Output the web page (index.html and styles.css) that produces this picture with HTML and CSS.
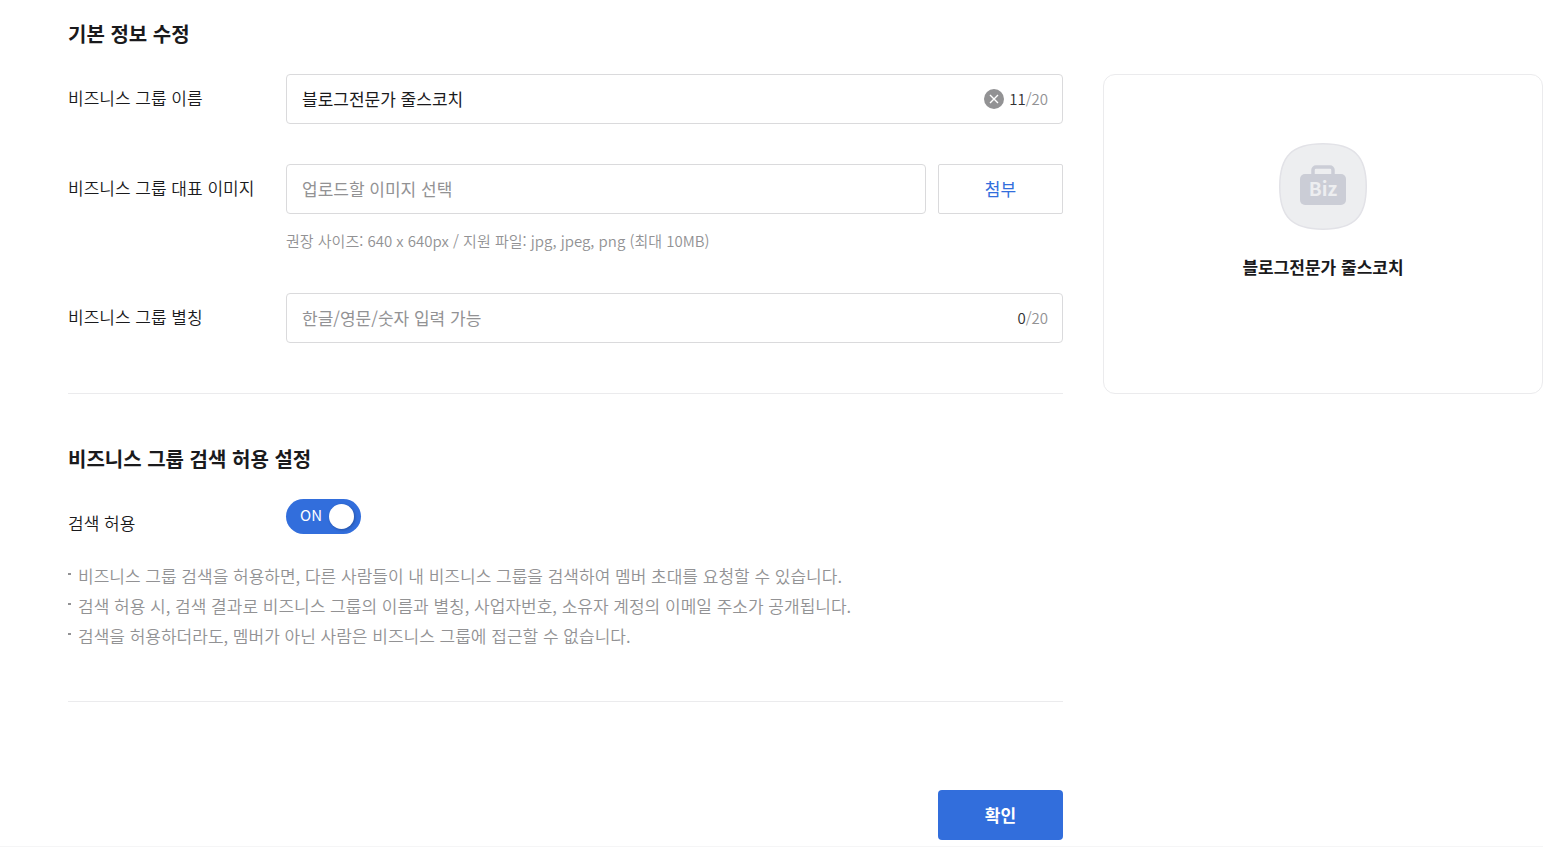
FILE: index.html
```html
<!DOCTYPE html>
<html lang="ko">
<head>
<meta charset="utf-8">
<meta name="viewport" content="width=device-width, initial-scale=1">
<title>비즈니스 그룹 정보 수정</title>
<link rel="stylesheet" href="styles.css">
</head>
<body>
<main class="page">
  <form class="form">
    <section class="section basic">
      <h2 class="title">기본 정보 수정</h2>
      <div class="row">
        <label class="label" for="name">비즈니스 그룹 이름</label>
        <div class="field">
          <div class="box">
            <input class="input" id="name" type="text" value="블로그전문가 줄스코치">
            <button class="clear" type="button" aria-label="지우기">
              <svg width="20" height="20" viewBox="0 0 20 20"><circle cx="10" cy="10" r="10" fill="#929294"/><path d="M6 6l8 8M14 6l-8 8" stroke="#fff" stroke-width="1.4"/></svg>
            </button>
            <span class="count"><span class="current">11</span>/20</span>
          </div>
        </div>
      </div>
      <div class="row">
        <label class="label" for="image">비즈니스 그룹 대표 이미지</label>
        <div class="field">
          <div class="upload">
            <div class="box"><input class="input" id="image" type="text" placeholder="업로드할 이미지 선택" readonly></div>
            <button class="button attach" type="button">첨부</button>
          </div>
          <p class="hint">권장 사이즈: 640 x 640px / 지원 파일: jpg, jpeg, png (최대 10MB)</p>
        </div>
      </div>
      <div class="row">
        <label class="label" for="alias">비즈니스 그룹 별칭</label>
        <div class="field">
          <div class="box">
            <input class="input" id="alias" type="text" placeholder="한글/영문/숫자 입력 가능">
            <span class="count"><span class="current">0</span>/20</span>
          </div>
        </div>
      </div>
    </section>
    <section class="section search">
      <h2 class="title">비즈니스 그룹 검색 허용 설정</h2>
      <div class="row allow">
        <label class="label" for="allow">검색 허용</label>
        <div class="switch">
          <input class="toggle" id="allow" type="checkbox" role="switch" checked>
          <span class="state" aria-hidden="true">ON</span>
          <span class="knob"></span>
        </div>
      </div>
      <ul class="notes">
        <li class="note">비즈니스 그룹 검색을 허용하면, 다른 사람들이 내 비즈니스 그룹을 검색하여 멤버 초대를 요청할 수 있습니다.</li>
        <li class="note">검색 허용 시, 검색 결과로 비즈니스 그룹의 이름과 별칭, 사업자번호, 소유자 계정의 이메일 주소가 공개됩니다.</li>
        <li class="note">검색을 허용하더라도, 멤버가 아닌 사람은 비즈니스 그룹에 접근할 수 없습니다.</li>
      </ul>
    </section>
    <div class="actions"><button class="button submit" type="submit">확인</button></div>
  </form>
  <aside class="card">
    <svg class="avatar" width="88" height="88" viewBox="0 0 88 88" role="img" aria-label="Biz">
      <path d="M44 .75C75 .75 87.250 13 87.250 43.500S75 86.250 44 86.250.75 74 .75 43.500 13 .75 44 .75Z" fill="#edeef0" stroke="#e2e2e7" stroke-width="1.500"/>
      <path d="M34 32v-5a3 3 0 0 1 3-3h14a3 3 0 0 1 3 3v5" fill="none" stroke="#cbcdd6" stroke-width="3.500"/>
      <rect x="21" y="31" width="46" height="31" rx="5" fill="#cbcdd6"/>
      <text class="avatar-text" x="44" y="53" text-anchor="middle">Biz</text>
    </svg>
    <strong class="card-name">블로그전문가 줄스코치</strong>
  </aside>
</main>
</body>
</html>
```

FILE: styles.css
```css
*, *::before { box-sizing: border-box; }
body {
  margin: 0;
  background: #fff;
  color: #1a1a1c;
  font: 400 17px/24px "Noto Sans CJK KR", sans-serif;
}
input, button { font: inherit; }
.page {
  display: flex;
  align-items: flex-start;
  gap: 40px;
  margin-right: 3px;
  padding: 22px 0 6px 68px;
  border-bottom: 1px solid #f5f5f6;
}
.form { flex: 1; min-width: 0; }
.section { border-bottom: 1px solid #ebebed; }
.basic { padding-bottom: 50px; }
.search { padding: 53px 0 50px; }
.title { margin: 0 0 28px; font-size: 20px; line-height: 24px; font-weight: 700; }
.row { display: flex; align-items: flex-start; }
.row + .row { margin-top: 40px; }
.label { flex: 0 0 218px; padding-top: 12px; font-weight: 350; }
.field { flex: 1; min-width: 0; }
.box {
  display: flex;
  flex: 1;
  align-items: center;
  min-width: 0;
  height: 50px;
  padding: 0 14px 0 15px;
  border: 1px solid #dadadc;
  border-radius: 4px;
}
.input {
  flex: 1;
  min-width: 0;
  padding: 0;
  border: 0;
  outline: 0;
  background: none;
  color: #1a1a1c;
}
.input::placeholder { color: #929294; opacity: 1; }
.clear {
  display: flex;
  margin-right: 5px;
  padding: 0;
  border: 0;
  background: none;
  cursor: pointer;
}
.count { color: #929294; font-size: 15px; font-weight: 350; }
.current { color: #303032; }
.upload { display: flex; gap: 12px; }
.button {
  width: 125px;
  height: 50px;
  padding: 0;
  border: 1px solid #dadadc;
  border-radius: 2px;
  background: #fff;
  color: #326edc;
  cursor: pointer;
}
.submit { border: 0; border-radius: 4px; background: #326edc; color: #fff; font-weight: 700; }
.hint { margin: 14px 0 0; color: #929294; font-size: 15px; line-height: 25px; font-weight: 350; }
.switch {
  position: relative;
  width: 75px;
  height: 35px;
  border-radius: 18px;
  background: #326edc;
}
.toggle { position: absolute; inset: 0; width: 100%; height: 100%; margin: 0; opacity: 0; cursor: pointer; }
.state { position: absolute; top: 4px; left: 14px; color: #fff; font-size: 15px; pointer-events: none; }
.knob {
  position: absolute;
  top: 5px;
  right: 7px;
  width: 25px;
  height: 25px;
  border-radius: 50%;
  background: #fff;
  box-shadow: 1px 1px 3px rgba(0, 0, 0, .25);
  pointer-events: none;
}
.notes { margin: 26px 0 0; padding: 0; list-style: none; }
.note { position: relative; padding-left: 10px; color: #929294; line-height: 30px; font-weight: 350; }
.note::before { content: ""; position: absolute; top: 12px; left: 0; width: 3px; height: 2px; background: #929294; }
.actions { display: flex; justify-content: flex-end; padding-top: 88px; }
.card {
  display: flex;
  flex: 0 0 440px;
  flex-direction: column;
  align-items: center;
  gap: 24px;
  min-height: 320px;
  margin-top: 52px;
  padding: 68px 20px;
  border: 1px solid #ebebed;
  border-radius: 12px;
}
.avatar-text { fill: #edeef0; font-size: 19px; font-weight: 700; }
.card-name { font-weight: 700; }
```
